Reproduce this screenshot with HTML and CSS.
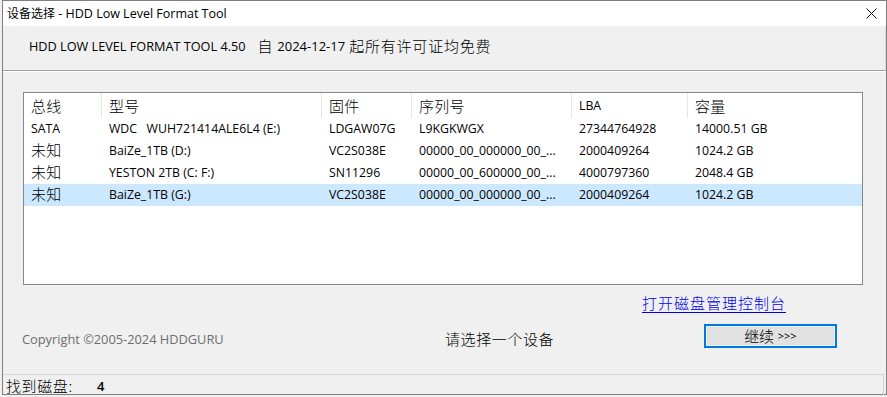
FILE: index.html
```html
<!DOCTYPE html>
<html lang="zh-CN">
<head>
<meta charset="utf-8">
<title>设备选择 - HDD Low Level Format Tool</title>
<link rel="stylesheet" href="styles.css">
</head>
<body>
<div class="window">
  <div class="titlebar">
    <span class="title"><span class="zh-t">设备选择</span> - HDD Low Level Format Tool</span>
    <svg class="close" width="11" height="11" viewBox="0 0 11 11"><path d="M0.5 0.5 L10.5 10.5 M10.5 0.5 L0.5 10.5" stroke="#111" stroke-width="1" fill="none"/></svg>
  </div>
  <div class="banner">
    <span class="ver">HDD LOW LEVEL FORMAT TOOL 4.50</span>
    <span class="zh">自</span><span class="date">2024-12-17</span><span class="zh">起所有许可证均免费</span>
  </div>
  <div class="main">
    <div class="listbox">
      <div class="row head">
        <div class="cell"><span class="zh">总线</span></div>
        <div class="cell"><span class="zh">型号</span></div>
        <div class="cell"><span class="zh">固件</span></div>
        <div class="cell"><span class="zh">序列号</span></div>
        <div class="cell">LBA</div>
        <div class="cell"><span class="zh">容量</span></div>
      </div>
      <div class="row">
        <div class="cell">SATA</div>
        <div class="cell">WDC&nbsp;&nbsp; WUH721414ALE6L4 (E:)</div>
        <div class="cell">LDGAW07G</div>
        <div class="cell">L9KGKWGX</div>
        <div class="cell">27344764928</div>
        <div class="cell">14000.51 GB</div>
      </div>
      <div class="row">
        <div class="cell"><span class="zh">未知</span></div>
        <div class="cell">BaiZe_1TB (D:)</div>
        <div class="cell">VC2S038E</div>
        <div class="cell">00000_00_000000_00_...</div>
        <div class="cell">2000409264</div>
        <div class="cell">1024.2 GB</div>
      </div>
      <div class="row">
        <div class="cell"><span class="zh">未知</span></div>
        <div class="cell">YESTON 2TB (C: F:)</div>
        <div class="cell">SN11296</div>
        <div class="cell">00000_00_600000_00_...</div>
        <div class="cell">4000797360</div>
        <div class="cell">2048.4 GB</div>
      </div>
      <div class="row selected">
        <div class="cell"><span class="zh">未知</span></div>
        <div class="cell">BaiZe_1TB (G:)</div>
        <div class="cell">VC2S038E</div>
        <div class="cell">00000_00_000000_00_...</div>
        <div class="cell">2000409264</div>
        <div class="cell">1024.2 GB</div>
      </div>
    </div>
    <div class="linkrow">
      <a class="link zh" href="#">打开磁盘管理控制台</a>
    </div>
    <div class="actions">
      <span class="copyright">Copyright ©2005-2024 HDDGURU</span>
      <span class="hint zh">请选择一个设备</span>
      <button class="btn"><span class="zh-b">继续</span> <span class="arrows">&gt;&gt;&gt;</span></button>
    </div>
  </div>
  <div class="status">
    <span class="zh found">找到磁盘:</span><span class="count">4</span>
  </div>
</div>
</body>
</html>
```

FILE: styles.css
```css
* { box-sizing: border-box; }

html, body {
  margin: 0;
  padding: 0;
  background: #f0f0f0;
}

body {
  font-family: "Open Sans", "Noto Sans CJK SC", sans-serif;
  font-size: 12px;
  color: #000;
}

.zh, .zh-t, .zh-b {
  font-family: "Noto Sans CJK SC", sans-serif;
  font-weight: 300;
}

.window {
  margin-left: 2px;
  width: 885px;
  height: 395px;
  border: 1px solid #7f7f7f;
  background: #f0f0f0;
  display: flex;
  flex-direction: column;
}

.titlebar {
  height: 25px;
  flex: none;
  background: #ffffff;
  display: flex;
  align-items: center;
  justify-content: space-between;
  padding: 0 9px 0 4px;
}

.title {
  font-size: 12.5px;
  line-height: 16px;
  color: #000;
}

.zh-t { font-size: 12px; font-weight: 400; }

.close { display: block; }

.banner {
  height: 45px;
  flex: none;
  padding: 10px 0 0 26px;
  border-bottom: 1px solid #a0a0a0;
  border-right: 1px solid #d8d8d8;
  background: #f0f0f0;
  display: flex;
  align-items: flex-start;
  line-height: 20px;
}

.banner .ver {
  font-size: 12.7px;
  margin-right: 12px;
}

.banner .zh {
  font-size: 15px;
  letter-spacing: 0.8px;
}

.banner .date {
  font-size: 13px;
  margin: 0 4px;
}

.main {
  height: 303px;
  flex: none;
  border-top: 1px solid #ffffff;
  padding: 20px 0 0 20px;
  display: flex;
  flex-direction: column;
}

.listbox {
  width: 840px;
  height: 193px;
  flex: none;
  border: 1px solid #828790;
  background: #ffffff;
}

.row {
  display: grid;
  grid-template-columns: 78px 220px 90px 160px 116px 174px;
  height: 22px;
  align-items: center;
}

.row.head {
  height: 25px;
  align-items: stretch;
}

.cell {
  padding-left: 7px;
  white-space: nowrap;
  overflow: hidden;
  line-height: 22px;
  font-size: 12.3px;
}

.head .cell {
  border-right: 1px solid #e5e5e5;
  line-height: 25px;
  display: flex;
  align-items: center;
}

.head .cell:last-child { border-right: none; }

.cell .zh {
  font-size: 15px;
  letter-spacing: 0.3px;
}

.row.selected {
  background: #cce8ff;
}

.linkrow {
  display: flex;
  justify-content: flex-end;
  width: 763px;
  margin-top: 8px;
  height: 20px;
}

.link {
  font-size: 15px;
  line-height: 20px;
  letter-spacing: 1px;
  color: #0000ee;
  text-decoration: underline;
  text-underline-offset: 3px;
}

.actions {
  margin-top: 10px;
  margin-left: -1px;
  display: grid;
  grid-template-columns: 423px 259px 133px;
  align-items: center;
  height: 24px;
}

.copyright {
  font-size: 12.8px;
  color: #6d6d6d;
  padding-top: 5px;
}

.hint {
  font-size: 15px;
  letter-spacing: 0.6px;
  padding-top: 5px;
}

.btn {
  width: 133px;
  height: 24px;
  border: 2px solid #0078d7;
  background: #e1e1e1;
  font-family: "Open Sans", "Noto Sans CJK SC", sans-serif;
  font-size: 11px;
  color: #000;
  padding: 0 0 1px 0;
  display: flex;
  align-items: center;
  justify-content: center;
  gap: 4px;
  box-shadow: inset 0 0 0 1px #e8f2fb;
}

.zh-b {
  font-size: 15px;
  letter-spacing: -0.3px;
}

.arrows {
  font-size: 11px;
}

.status {
  flex: 1;
  border-top: 1px solid #d7d7d7;
  display: flex;
  align-items: center;
  padding-left: 3px;
  border-right: 1px solid #d0d0d0;
  margin-right: 2px;
}

.found {
  font-size: 15px;
  letter-spacing: 0.6px;
  width: 91px;
}

.count {
  font-size: 13px;
  font-weight: 600;
}
```
